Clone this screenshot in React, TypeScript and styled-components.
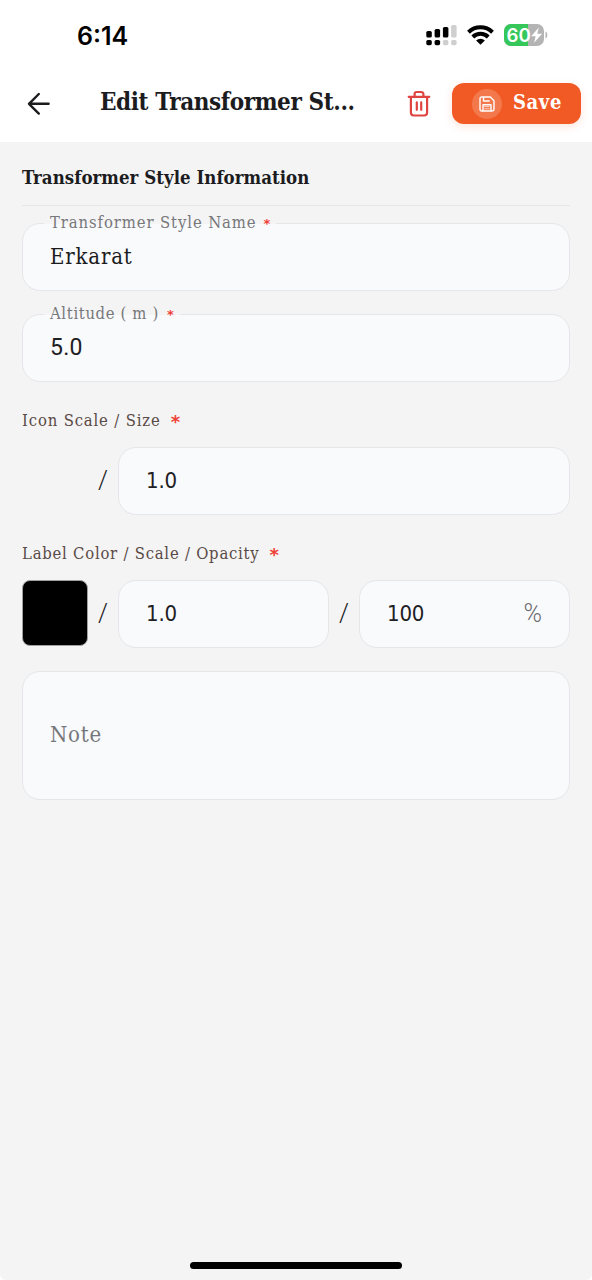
import React from 'react';
import styled, { createGlobalStyle } from 'styled-components';

const slab = `"Roboto Slab", "DejaVu Serif Condensed", "DejaVu Serif", serif`;
const digits = `"DejaVu Sans Condensed", "DejaVu Sans", sans-serif`;

const GlobalStyle = createGlobalStyle`
  *, *::before, *::after { box-sizing: border-box; }
  body { margin: 0; background: #fff; }
`;

const Screen = styled.div`
  display: flex;
  flex-direction: column;
  width: 592px;
  height: 1280px;
  overflow: hidden;
  background: #f4f4f4;
  border-radius: 0 0 6px 6px;
  font-family: ${slab};
  font-stretch: condensed;
  color: #1c1c1f;
`;

const Text = styled.span<{ $size: number; $track?: number; $bold?: boolean; $color?: string }>`
  font-size: ${p => p.$size}px;
  letter-spacing: ${p => p.$track ?? 0}px;
  font-weight: ${p => (p.$bold ? 700 : 400)};
  color: ${p => p.$color ?? 'inherit'};
  line-height: 1;
  white-space: pre;
`;

const StatusBar = styled.div`
  display: flex;
  flex: none;
  align-items: center;
  height: 70px;
  padding: 0 44px 0 77px;
  background: #fff;
`;

const Clock = styled.span`
  flex: 1;
  font: 600 25px/1 Inter, sans-serif;
  color: #000;
  padding-top: 2px;
`;

const StatusIcons = styled.div`
  display: flex;
  align-items: center;
  gap: 10px;
`;

const AppBar = styled.header`
  display: flex;
  flex: none;
  align-items: center;
  height: 72px;
  padding: 0 11px 5px 24px;
  background: #fff;
`;

const Title = styled.h1`
  flex: 1;
  margin: 0;
  padding: 0 0 4px 46px;
  line-height: 1;
  display: flex;
`;

const IconButton = styled.button`
  display: flex;
  padding: 0;
  border: 0;
  background: none;
`;

const SaveButton = styled.button`
  display: flex;
  align-items: center;
  gap: 11px;
  width: 129px;
  height: 41px;
  margin-left: 21px;
  padding: 0 0 0 20px;
  border: 0;
  border-radius: 12px;
  background: #f15a24;
  color: #fff;
  font-family: inherit;
  font-stretch: inherit;
  box-shadow: 0 3px 8px rgba(241, 90, 36, 0.15);
`;

const SaveCaption = styled(Text)`
  padding-bottom: 4px;
`;

const SaveBadge = styled.span`
  display: flex;
  align-items: center;
  justify-content: center;
  width: 30px;
  height: 30px;
  border-radius: 50%;
  background: rgba(255, 255, 255, 0.19);
`;

const Form = styled.main`
  display: flex;
  flex: 1;
  flex-direction: column;
  padding: 0 22px;
`;

const SectionTitle = styled.h2`
  display: flex;
  align-items: center;
  height: 64px;
  margin: 0 0 17px;
  padding-top: 9px;
  border-bottom: 1px solid #e6e6e7;
`;

const Field = styled.div<{ $height?: number }>`
  position: relative;
  display: flex;
  flex: 1 1 0;
  align-items: center;
  justify-content: space-between;
  height: ${p => p.$height ?? 68}px;
  padding: 0 27px 1px;
  border: 1px solid #e5e6e9;
  border-radius: 18px;
  background: #f9fafc;
`;

const Stack = styled.div`
  display: flex;
  flex-direction: column;
  gap: 23px;
  > * { flex: none; }
`;

const FloatingLabel = styled.label`
  position: absolute;
  top: -13px;
  left: 21px;
  display: flex;
  align-items: center;
  height: 24px;
  padding: 0 6px;
  background: linear-gradient(#f4f4f4 54%, #f9fafc 54%);
`;

const GroupLabel = styled.div`
  display: flex;
  align-items: center;
  height: 65px;
  padding-top: 14px;
`;

const Row = styled.div<{ $spaced?: boolean }>`
  display: flex;
  align-items: center;
  margin-top: ${p => (p.$spaced ? 23 : 0)}px;
`;

const Swatch = styled.div<{ $color: string }>`
  width: 66px;
  height: 66px;
  margin-bottom: 2px;
  border: 1px solid ${p => (p.$color === 'transparent' ? 'transparent' : '#a0a0a0')};
  border-radius: 8px;
  background: ${p => p.$color};
`;

const Slash = styled.span`
  width: 30px;
  padding-bottom: 2px;
  font: 300 25px/1 Roboto, sans-serif;
  text-align: center;
`;

const Value = styled.span`
  font: 400 22px/1 ${digits};
  font-stretch: condensed;
  letter-spacing: -0.2px;
  color: #1f2024;
`;

const PlainValue = styled(Value)`
  font-family: Roboto, sans-serif;
  font-stretch: normal;
  font-size: 23px;
  letter-spacing: 0.3px;
`;

const HomeIndicator = styled.div`
  flex: none;
  width: 212px;
  height: 7px;
  margin: 0 auto 11px;
  border-radius: 4px;
  background: #000;
`;

const Percent = styled.span`
  font: 300 25px/1 Roboto, sans-serif;
  color: #6c6c70;
`;

const Star = styled.span<{ $size: number; $gap: number }>`
  margin-left: ${p => p.$gap}px;
  font: 700 ${p => p.$size}px/1 "DejaVu Sans", sans-serif;
  color: #ef4136;
`;

const Signal = () => (
  <svg width="31" height="22" viewBox="0 0 31 22">
    {[[0, 6], [8.3, 4], [16.6, 2], [24.8, 0]].map(([x, y], i) => (
      <g key={x}>
        <rect x={x + 0.3} y={y + 1} width="5.5" height={12.5 - y} rx="1.6" fill={i < 3 ? '#000' : '#cfcfcf'} />
        <rect x={x + 0.3} y="16" width="5.5" height="5.2" rx="1.6" fill={i < 2 ? '#000' : '#cfcfcf'} />
      </g>
    ))}
  </svg>
);

const Wifi = () => (
  <svg width="27" height="20" viewBox="0 0 27 20">
    <g fill="none" stroke="#000" strokeWidth="4">
      <path d="M1.5 7.2a17.2 17.2 0 0 1 24 0" />
      <path d="M5.8 12a10.9 10.9 0 0 1 15.4 0" />
    </g>
    <path d="M13.5 19.7 9.1 15.4a6.4 6.4 0 0 1 8.8 0Z" />
  </svg>
);

const Battery = () => (
  <svg width="44" height="22" viewBox="0 0 44 22">
    <defs>
      <clipPath id="cell"><rect width="40" height="22" rx="7" /></clipPath>
    </defs>
    <g clipPath="url(#cell)">
      <rect width="40" height="22" fill="#b4b4b5" />
      <rect width="24" height="22" fill="#35c759" />
    </g>
    <path d="M41.5 7.5c2.4.8 2.4 6.2 0 7z" fill="#b4b4b5" />
    <text x="2.5" y="17.7" fontFamily="Inter, sans-serif" fontWeight="600" fontSize="18.7" fill="#fff">60</text>
    <path d="M34.8 3.6 27.2 12.2h4.4l-1.5 6.6 8-9h-4.8z" fill="#fff" />
  </svg>
);

const BackArrow = () => (
  <svg width="30" height="30" viewBox="0 0 30 30" fill="none" stroke="#1c1c1f" strokeWidth="2.4" strokeLinecap="round" strokeLinejoin="round">
    <path d="M24.6 14.8H5M14.8 5 5 14.8l9.8 9.8" />
  </svg>
);

const Trash = () => (
  <svg width="24" height="28" viewBox="0 0 24 28" fill="none" stroke="#e04440" strokeWidth="2.2" strokeLinecap="round" strokeLinejoin="round">
    <path d="M1.7 6.8h20.6M3.9 6.8v15.7a3 3 0 0 0 3 3h10.2a3 3 0 0 0 3-3V6.8M7.6 6.4V4.2a2.2 2.2 0 0 1 2.2-2.2h4.4a2.2 2.2 0 0 1 2.2 2.2v2.2M9.8 12.4v7.4M14.2 12.4v7.4" />
  </svg>
);

const Disk = () => (
  <svg width="16" height="16" viewBox="0 0 16 16" fill="none" stroke="#fff" strokeWidth="1.4" strokeLinejoin="round">
    <path d="M2.7 1h8.6L15 4.7v8.6a1.7 1.7 0 0 1-1.7 1.7H2.7A1.7 1.7 0 0 1 1 13.3V2.7A1.7 1.7 0 0 1 2.7 1Z" />
    <path d="M4.5 1v4h6.2M4 15V8.7h8V15" />
    <path d="M5.3 10.6h5.4M5.3 12.8h5.4" strokeWidth="1" opacity="0.65" />
  </svg>
);

export default function App() {
  return (
    <>
      <GlobalStyle />
      <Screen>
        <StatusBar>
          <Clock>6:14</Clock>
          <StatusIcons><Signal /><Wifi /><Battery /></StatusIcons>
        </StatusBar>
        <AppBar>
          <IconButton aria-label="Back"><BackArrow /></IconButton>
          <Title><Text $size={24} $bold $track={-0.4}>Edit Transformer St...</Text></Title>
          <IconButton aria-label="Delete"><Trash /></IconButton>
          <SaveButton>
            <SaveBadge><Disk /></SaveBadge>
            <SaveCaption $size={20} $bold $track={0.6}>Save</SaveCaption>
          </SaveButton>
        </AppBar>
        <Form>
          <SectionTitle><Text $size={18.5} $bold $track={0.03}>Transformer Style Information</Text></SectionTitle>
          <Stack>
            <Field>
              <FloatingLabel>
                <Text $size={16.5} $track={0.9} $color="#77787b">Transformer Style Name</Text>
                <Star $size={13} $gap={7}>*</Star>
              </FloatingLabel>
              <Text $size={22} $track={0.8}>Erkarat</Text>
            </Field>
            <Field>
              <FloatingLabel>
                <Text $size={16.5} $track={0.65} $color="#77787b">Altitude ( m )</Text>
                <Star $size={13} $gap={8}>*</Star>
              </FloatingLabel>
              <PlainValue>5.0</PlainValue>
            </Field>
          </Stack>
          <GroupLabel>
            <Text $size={16.5} $track={0.85} $color="#5a4a47">Icon Scale / Size</Text>
            <Star $size={18} $gap={10}>*</Star>
          </GroupLabel>
          <Row>
            <Swatch $color="transparent" />
            <Slash>/</Slash>
            <Field><Value>1.0</Value></Field>
          </Row>
          <GroupLabel>
            <Text $size={16.5} $track={0.77} $color="#5a4a47">Label Color / Scale / Opacity</Text>
            <Star $size={18} $gap={10}>*</Star>
          </GroupLabel>
          <Row>
            <Swatch $color="#000" />
            <Slash>/</Slash>
            <Field><Value>1.0</Value></Field>
            <Slash>/</Slash>
            <Field><Value>100</Value><Percent>%</Percent></Field>
          </Row>
          <Row $spaced>
            <Field $height={129}><Text $size={22} $track={0.8} $color="#77787b">Note</Text></Field>
          </Row>
        </Form>
        <HomeIndicator />
      </Screen>
    </>
  );
}
